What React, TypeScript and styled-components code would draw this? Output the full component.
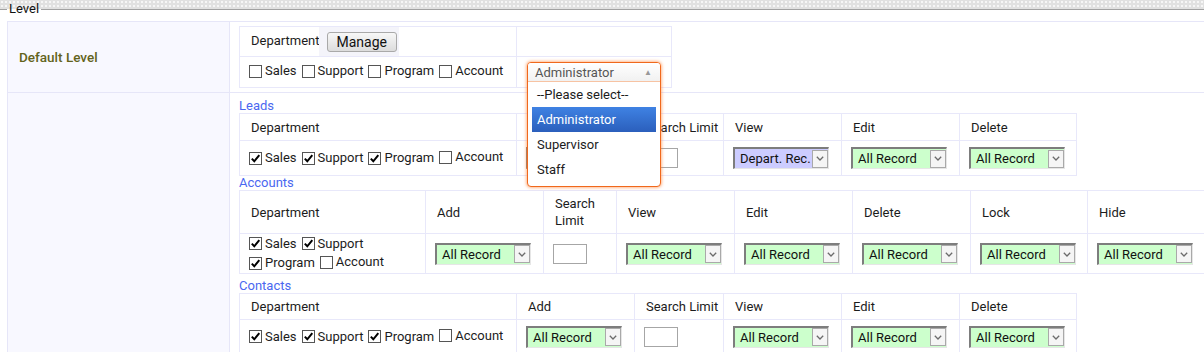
import React from 'react';
import styled, { createGlobalStyle } from 'styled-components';

const GlobalStyle = createGlobalStyle`
  html, body {
    margin: 0;
    padding: 0;
    overflow: hidden;
    background: #fff;
  }
  body {
    font-family: Roboto, "Liberation Sans", sans-serif;
    font-size: 13px;
    color: #1c1c1c;
  }
`;

const Page = styled.div`
  width: 1204px;
  height: 352px;
  overflow: hidden;
  padding-top: 1px;
  box-sizing: border-box;
  background-color: #e1e1e1;
  background-image: radial-gradient(circle, #f6f6f6 0.9px, transparent 1.1px);
  background-size: 4px 4px;
`;

const Fieldset = styled.fieldset`
  margin: 0;
  padding: 4px 0 0 7px;
  min-width: 0;
  border: 0;
  border-top: 1px solid #a2a2a2;
  background: #fff;
  height: 400px;
`;

const Legend = styled.legend`
  padding: 0 2px;
  font-size: 13px;
  line-height: 16px;
  color: #111;
`;

const Layout = styled.table`
  border-collapse: collapse;
  table-layout: fixed;
  width: 1230px;
`;

const OuterRow = styled.tr<{ $h?: number }>`
  height: ${p => (p.$h ? `${p.$h}px` : 'auto')};
`;

const SideCell = styled.td`
  background: #f8f8ff;
  border: 1px solid #e6e6f8;
  padding: 0 0 0 11px;
  vertical-align: middle;
  color: #63631c;
  font-weight: 500;
  font-size: 13.5px;
`;

const MainCell = styled.td<{ $pad: string }>`
  border: 1px solid #e6e6f8;
  padding: ${p => p.$pad};
  vertical-align: top;
`;

const GridTable = styled.table<{ $wrap?: boolean }>`
  border-collapse: collapse;
  table-layout: fixed;
  white-space: ${p => (p.$wrap ? 'normal' : 'nowrap')};
`;

const Row = styled.tr<{ $h: number }>`
  height: ${p => p.$h}px;
`;

const Th = styled.th`
  border: 1px solid #e8e8fa;
  padding: 0 11px;
  text-align: left;
  font-weight: normal;
  line-height: 17px;
  vertical-align: middle;
`;

const Td = styled.td`
  border: 1px solid #e8e8fa;
  padding: 0 9px;
  line-height: 17px;
  vertical-align: middle;
`;

const SectionLabel = styled.div<{ $top?: number }>`
  color: #4a67f0;
  line-height: 14px;
  margin-top: ${p => p.$top ?? 0}px;
`;

const ButtonWell = styled.span`
  display: inline-block;
  background: #f4f4fa;
  padding: 5px 2px 4px 8px;
  margin-left: -1px;
  vertical-align: middle;
`;

const Button = styled.button`
  height: 20px;
  padding: 0 9px;
  font-family: inherit;
  font-size: 14px;
  line-height: 17px;
  color: #111;
  border: 1px solid #a9a9a9;
  border-radius: 3px;
  background: linear-gradient(#f7f7f7, #dcdcdc);
`;

const CheckItem = styled.label`
  display: inline-flex;
  align-items: center;
  margin-right: 5px;
  white-space: nowrap;
`;

const Box = styled.span`
  width: 13px;
  height: 13px;
  box-sizing: border-box;
  border: 1px solid #555;
  background: #fff;
  margin-right: 3px;
  margin-top: 1px;
  display: inline-flex;
  align-items: center;
  justify-content: center;
`;

const Select = styled.div<{ $tone: 'green' | 'blue' }>`
  display: inline-flex;
  align-items: center;
  box-sizing: border-box;
  width: 96px;
  height: 22px;
  border-style: solid;
  border-width: 2px 1px 1px 2px;
  border-color: #7d7d7d #e6e6e6 #e6e6e6 #7d7d7d;
  background: ${p => (p.$tone === 'blue' ? '#ccccff' : '#ccffcc')};
  padding-left: 5px;
  vertical-align: middle;
`;

const SelectText = styled.span`
  flex: 1;
  white-space: nowrap;
  color: #111;
`;

const SelectArrow = styled.span`
  width: 16px;
  height: 18px;
  box-sizing: border-box;
  border: 1px solid #a9a9a9;
  background: #f5f5f5;
  display: flex;
  align-items: center;
  justify-content: center;
`;

const LimitInput = styled.span`
  display: inline-block;
  box-sizing: border-box;
  width: 34px;
  height: 20px;
  border: 1px solid #a6a6a6;
  background: #fff;
  vertical-align: middle;
`;

const ComboSlot = styled.div`
  position: relative;
  height: 20px;
`;

const Combo = styled.div`
  position: absolute;
  top: 0;
  left: 1px;
  width: 134px;
  box-sizing: border-box;
  border: 1px solid #f0681c;
  border-radius: 4px;
  background: #fff;
  box-shadow: 0 0 3px 1px rgba(255, 128, 50, 0.55);
  z-index: 5;
`;

const ComboHead = styled.div`
  display: flex;
  align-items: center;
  justify-content: space-between;
  height: 18px;
  padding: 0 8px 0 7px;
  color: #555;
  border-radius: 3px 3px 0 0;
  background: linear-gradient(#fff, #f1f1f1);
  border-bottom: 1px solid #f7c3a3;
`;

const UpArrow = styled.span`
  font-size: 8px;
  color: #999;
`;

const OptionList = styled.div`
  padding: 0 4px 4px;
`;

const Option = styled.div<{ $active?: boolean }>`
  height: 25px;
  line-height: 25px;
  padding-left: 5px;
  color: ${p => (p.$active ? '#fff' : '#1c1c1c')};
  background: ${p => (p.$active ? 'linear-gradient(#3f82e3, #2b5fbc)' : 'transparent')};
`;

const Check = ({ label, on }: { label: string; on?: boolean }) => (
  <CheckItem>
    <Box>
      {on && (
        <svg width="11" height="11" viewBox="0 0 11 11">
          <path d="M1.8 5.6 L4.3 8.3 L9.3 2.2" fill="none" stroke="#000" strokeWidth="2" />
        </svg>
      )}
    </Box>
    {label}
  </CheckItem>
);

const Pick = ({ text = 'All Record', tone = 'green' }: { text?: string; tone?: 'green' | 'blue' }) => (
  <Select $tone={tone}>
    <SelectText>{text}</SelectText>
    <SelectArrow>
      <svg width="8" height="5" viewBox="0 0 8 5">
        <path d="M0.8 0.8 L4 4 L7.2 0.8" fill="none" stroke="#6b6b6b" strokeWidth="1.3" />
      </svg>
    </SelectArrow>
  </Select>
);

const Cols = ({ widths }: { widths: number[] }) => (
  <colgroup>
    {widths.map((w, i) => (
      <col key={i} width={w} />
    ))}
  </colgroup>
);

const sum = (a: number[]) => a.reduce((s, n) => s + n, 0);

const shortCols = [277, 118, 89, 118, 118, 117];
const longCols = [186, 118, 73, 118, 118, 118, 117, 118];

const Depts = ({ account }: { account?: boolean }) => (
  <>
    <Check label="Sales" on />
    <Check label="Support" on />
    <Check label="Program" on />
    <Check label="Account" on={account} />
  </>
);

const App = (): JSX.Element => {
  return (
    <Page>
      <GlobalStyle />
      <Fieldset>
        <Legend>Level</Legend>
        <Layout>
          <Cols widths={[222, 1008]} />
          <tbody>
            <OuterRow $h={71}>
              <SideCell>Default Level</SideCell>
              <MainCell $pad="4px 9px 4px">
                <GridTable style={{ width: sum([277, 155]) }}>
                  <Cols widths={[277, 155]} />
                  <tbody>
                    <Row $h={30}>
                      <Th>
                        Department
                        <ButtonWell>
                          <Button>Manage</Button>
                        </ButtonWell>
                      </Th>
                      <Th />
                    </Row>
                    <Row $h={31}>
                      <Td>
                        <Check label="Sales" />
                        <Check label="Support" />
                        <Check label="Program" />
                        <Check label="Account" />
                      </Td>
                      <Td>
                        <ComboSlot>
                          <Combo>
                            <ComboHead>
                              Administrator
                              <UpArrow>▲</UpArrow>
                            </ComboHead>
                            <OptionList>
                              <Option>--Please select--</Option>
                              <Option $active>Administrator</Option>
                              <Option>Supervisor</Option>
                              <Option>Staff</Option>
                            </OptionList>
                          </Combo>
                        </ComboSlot>
                      </Td>
                    </Row>
                  </tbody>
                </GridTable>
              </MainCell>
            </OuterRow>
            <OuterRow>
              <SideCell />
              <MainCell $pad="6px 9px 0">
                <SectionLabel>Leads</SectionLabel>
                <GridTable style={{ width: sum(shortCols) }}>
                  <Cols widths={shortCols} />
                  <tbody>
                    <Row $h={27}>
                      <Th>Department</Th>
                      <Th>Add</Th>
                      <Th>Search Limit</Th>
                      <Th>View</Th>
                      <Th>Edit</Th>
                      <Th>Delete</Th>
                    </Row>
                    <Row $h={35}>
                      <Td><Depts /></Td>
                      <Td><Pick /></Td>
                      <Td><LimitInput /></Td>
                      <Td><Pick text="Depart. Rec." tone="blue" /></Td>
                      <Td><Pick /></Td>
                      <Td><Pick /></Td>
                    </Row>
                  </tbody>
                </GridTable>
                <SectionLabel>Accounts</SectionLabel>
                <GridTable $wrap style={{ width: sum(longCols) }}>
                  <Cols widths={longCols} />
                  <tbody>
                    <Row $h={43}>
                      <Th>Department</Th>
                      <Th>Add</Th>
                      <Th>Search Limit</Th>
                      <Th>View</Th>
                      <Th>Edit</Th>
                      <Th>Delete</Th>
                      <Th>Lock</Th>
                      <Th>Hide</Th>
                    </Row>
                    <Row $h={40}>
                      <Td><Depts /></Td>
                      <Td><Pick /></Td>
                      <Td><LimitInput /></Td>
                      <Td><Pick /></Td>
                      <Td><Pick /></Td>
                      <Td><Pick /></Td>
                      <Td><Pick /></Td>
                      <Td><Pick /></Td>
                    </Row>
                  </tbody>
                </GridTable>
                <SectionLabel $top={5}>Contacts</SectionLabel>
                <GridTable style={{ width: sum(shortCols) }}>
                  <Cols widths={shortCols} />
                  <tbody>
                    <Row $h={26}>
                      <Th>Department</Th>
                      <Th>Add</Th>
                      <Th>Search Limit</Th>
                      <Th>View</Th>
                      <Th>Edit</Th>
                      <Th>Delete</Th>
                    </Row>
                    <Row $h={34}>
                      <Td><Depts /></Td>
                      <Td><Pick /></Td>
                      <Td><LimitInput /></Td>
                      <Td><Pick /></Td>
                      <Td><Pick /></Td>
                      <Td><Pick /></Td>
                    </Row>
                  </tbody>
                </GridTable>
              </MainCell>
            </OuterRow>
          </tbody>
        </Layout>
      </Fieldset>
    </Page>
  );
};

export default App;
